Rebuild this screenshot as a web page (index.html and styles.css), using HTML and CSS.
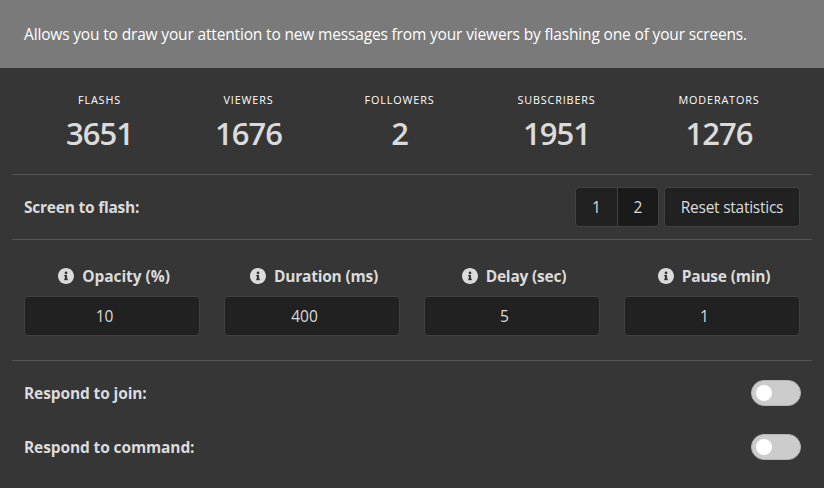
FILE: index.html
```html
<!DOCTYPE html>
<html lang="en">
<head>
<meta charset="utf-8">
<title>Flash settings</title>
<link rel="stylesheet" href="styles.css">
</head>
<body>
<svg width="0" height="0" class="sprite"><symbol id="info" viewBox="8 8 496 496"><path fill="currentColor" d="M256 8C119.043 8 8 119.083 8 256c0 136.997 111.043 248 248 248s248-111.003 248-248C504 119.083 392.957 8 256 8zm0 110c23.196 0 42 18.804 42 42s-18.804 42-42 42-42-18.804-42-42 18.804-42 42-42zm56 254c0 6.627-5.373 12-12 12h-88c-6.627 0-12-5.373-12-12v-24c0-6.627 5.373-12 12-12h12v-64h-12c-6.627 0-12-5.373-12-12v-24c0-6.627 5.373-12 12-12h64c6.627 0 12 5.373 12 12v100h12c6.627 0 12 5.373 12 12v24z"/></symbol></svg>
<header class="intro"><span>Allows you to draw your attention to new messages from your viewers by flashing one of your screens.</span></header>
<main class="panel">
  <section class="stats">
    <div class="stat"><p class="heading">Flashs</p><p class="value">3651</p></div>
    <div class="stat"><p class="heading">Viewers</p><p class="value">1676</p></div>
    <div class="stat"><p class="heading">Followers</p><p class="value">2</p></div>
    <div class="stat"><p class="heading">Subscribers</p><p class="value">1951</p></div>
    <div class="stat"><p class="heading">Moderators</p><p class="value">1276</p></div>
  </section>
  <section class="screens">
    <span class="label screen-label">Screen to flash:</span>
    <div class="actions">
      <div class="group"><button class="button">1</button><button class="button active">2</button></div>
      <button class="button reset">Reset statistics</button>
    </div>
  </section>
  <section class="fields">
    <div class="field"><label class="label opacity" for="opacity"><svg class="icon"><use href="#info"/></svg><span>Opacity (%)</span></label><input id="opacity" value="10"></div>
    <div class="field"><label class="label duration" for="duration"><svg class="icon"><use href="#info"/></svg><span>Duration (ms)</span></label><input id="duration" value="400"></div>
    <div class="field"><label class="label delay" for="delay"><svg class="icon"><use href="#info"/></svg><span>Delay (sec)</span></label><input id="delay" value="5"></div>
    <div class="field"><label class="label pause" for="pause"><svg class="icon"><use href="#info"/></svg><span>Pause (min)</span></label><input id="pause" value="1"></div>
  </section>
  <section class="responses">
    <div class="response"><span class="label join">Respond to join:</span><span class="switch"></span></div>
    <div class="response"><span class="label command">Respond to command:</span><span class="switch"></span></div>
  </section>
</main>
</body>
</html>
```
FILE: styles.css
```css
* { box-sizing: border-box; }
body {
  margin: 0;
  min-height: 488px;
  background: #363636;
  color: #dbdbdb;
  font: 15.5px/24px "Open Sans", "Noto Sans", sans-serif;
}
p { margin: 0; }
.sprite { display: block; }
.intro {
  height: 68px;
  padding: 22px 24px;
  background: #7a7a7a;
  color: #fff;
  white-space: nowrap;
  letter-spacing: -0.16px;
}
.panel { padding: 0 12px; }
.stats {
  display: grid;
  grid-template-columns: 149px 149px 153px 161px 164px;
  height: 107px;
  padding: 24px 11px 0 13px;
  border-bottom: 1px solid #545454;
  text-align: center;
}
.heading {
  color: #fff;
  font-size: 10.8px;
  line-height: 16px;
  letter-spacing: 0.85px;
  text-transform: uppercase;
}
.value {
  margin-top: 5px;
  font-size: 31px;
  line-height: 40px;
  font-weight: 600;
  letter-spacing: -1px;
}
.screens {
  display: flex;
  align-items: center;
  justify-content: space-between;
  height: 65px;
  padding: 0 12px;
  border-bottom: 1px solid #545454;
}
.label { font-weight: 700; letter-spacing: -0.2px; }
.screen-label { letter-spacing: -0.23px; }
.join, .command { letter-spacing: -0.12px; }
.label.opacity { letter-spacing: -0.05px; }
.actions { display: flex; gap: 5px; }
.group { display: flex; }
.button {
  width: 43px;
  height: 40px;
  padding: 0;
  border: 1px solid #424242;
  border-radius: 4px;
  background: #212121;
  color: #dbdbdb;
  font: inherit;
}
.group .button:first-child { border-radius: 4px 0 0 4px; }
.group .active {
  width: 42px;
  margin-left: -1px;
  border-radius: 0 4px 4px 0;
  background: #1a1a1a;
}
.reset { width: 136px; letter-spacing: -0.25px; }
.fields {
  display: grid;
  grid-template-columns: repeat(4, 1fr);
  column-gap: 24px;
  height: 121px;
  padding: 24px 12px 0;
  border-bottom: 1px solid #545454;
}
.field .label {
  display: flex;
  align-items: center;
  justify-content: center;
  gap: 8px;
  height: 24px;
  margin-bottom: 8px;
  padding-left: 4px;
  white-space: nowrap;
}
.icon { width: 16px; height: 16px; flex: none; }
.field input {
  display: block;
  width: 100%;
  height: 40px;
  padding: 0 24px 0 9px;
  border: 1px solid #424242;
  border-radius: 4px;
  background: #212121;
  color: #dbdbdb;
  font: inherit;
  text-align: center;
}
.responses { padding: 5px 11px 0 12px; }
.response {
  display: flex;
  align-items: center;
  justify-content: space-between;
  height: 54px;
}
.switch {
  display: flex;
  align-items: center;
  width: 50px;
  height: 26px;
  padding-left: 4px;
  border: 1px solid #b5b5b5;
  border-radius: 13px;
  background: #ccc;
}
.switch::before {
  content: "";
  width: 16px;
  height: 16px;
  border-radius: 50%;
  background: #fff;
}
```
